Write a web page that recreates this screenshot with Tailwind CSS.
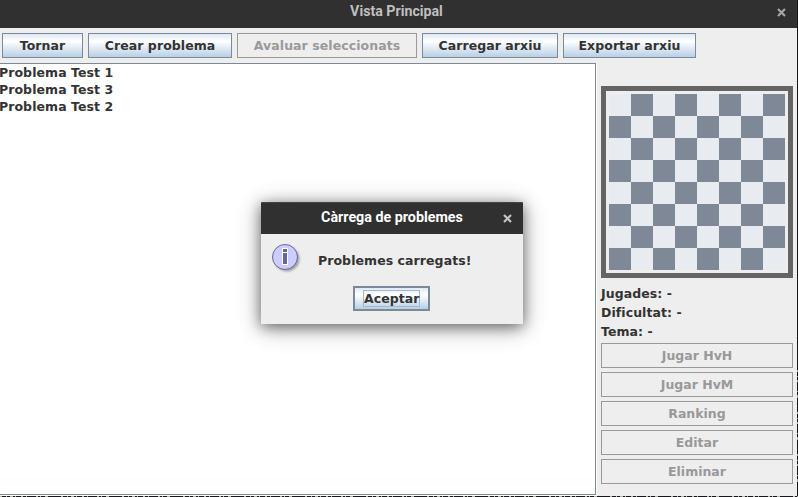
<!DOCTYPE html>
<html lang="ca">
<head>
<meta charset="utf-8">
<title>Vista Principal</title>
<script src="https://cdn.jsdelivr.net/npm/@tailwindcss/browser@4"></script>
</head>
<body class="w-[798px] h-[497px] overflow-hidden bg-[#16161c]">
<div class="relative w-[798px] h-[497px] overflow-hidden font-['DejaVu_Sans',sans-serif] font-bold text-[12.5px] leading-[17px] tracking-[0.07px] text-[#333333]">
  <div class="w-[797px] h-[496px] bg-[#eeeeee] flex flex-col">
    <header class="h-[28px] shrink-0 bg-[#303030] flex items-center text-[#bfbfbf]">
      <div class="w-[14px]"></div>
      <h1 class="flex-1 text-center pb-[5px] pl-[2px] font-[Roboto,sans-serif] font-bold text-[14.2px] tracking-normal">Vista Principal</h1>
      <svg class="w-[9px] h-[9px] mr-[11px] mt-[-4px]" viewBox="0 0 9 9"><path d="M1 1L8 8M8 1L1 8" stroke="#a6a6a6" stroke-width="2.2"/></svg>
    </header>
    <nav class="h-[35px] shrink-0 flex gap-[5px] pt-[5px] pl-[2px]">
      <button class="w-[81px] h-[25px] border border-[#7a8a99] bg-linear-[180deg,#dfe9f4_0%,#ffffff_32%,#b8cfe5_100%] whitespace-nowrap">Tornar</button>
      <button class="w-[144px] h-[25px] border border-[#7a8a99] bg-linear-[180deg,#dfe9f4_0%,#ffffff_32%,#b8cfe5_100%] whitespace-nowrap">Crear problema</button>
      <button class="w-[180px] h-[25px] border border-[#999999] text-[#999999] whitespace-nowrap">Avaluar seleccionats</button>
      <button class="w-[136px] h-[25px] border border-[#7a8a99] bg-linear-[180deg,#dfe9f4_0%,#ffffff_32%,#b8cfe5_100%] whitespace-nowrap">Carregar arxiu</button>
      <button class="w-[133px] h-[25px] border border-[#7a8a99] bg-linear-[180deg,#dfe9f4_0%,#ffffff_32%,#b8cfe5_100%] whitespace-nowrap">Exportar arxiu</button>
    </nav>
    <main class="flex h-[433px]">
      <ul class="w-[596px] h-[432px] shrink-0 bg-white border border-l-0 border-[#7a8a99] shadow-[1px_1px_0_#ffffff]">
        <li class="-ml-px">Problema Test 1</li>
        <li class="-ml-px">Problema Test 3</li>
        <li class="-ml-px">Problema Test 2</li>
      </ul>
      <aside class="w-[192px] ml-[5px] pt-[23px]">
        <div id="board" class="w-[192px] h-[192px] border-5 border-[#646464] p-[3px] grid grid-cols-8 grid-rows-8"></div>
        <div class="pt-[6px] leading-[19px]">
          <p>Jugades: -</p>
          <p>Dificultat: -</p>
          <p>Tema: -</p>
        </div>
        <div class="flex flex-col gap-[4px] pt-[2px] text-[#999999] tracking-normal">
          <button class="h-[25px] border border-[#999999]">Jugar HvH</button>
          <button class="h-[25px] border border-[#999999]">Jugar HvM</button>
          <button class="h-[25px] border border-[#999999]">Ranking</button>
          <button class="h-[25px] border border-[#999999]">Editar</button>
          <button class="h-[25px] border border-[#999999]">Eliminar</button>
        </div>
      </aside>
    </main>
  </div>
  <svg class="absolute left-0 top-[496px] w-[798px] h-[1px]" viewBox="0 0 798 1"><path d="M0 .5H798" stroke="#b9b9ae" stroke-dasharray="2 4 1 3 3 2 1 5 2 3 1 9 2 2 1 4 3 13"/></svg>
  <svg class="absolute left-[797px] top-[370px] w-[1px] h-[127px]" viewBox="0 0 1 127"><path d="M.5 0V127" stroke="#a0a09c" stroke-dasharray="2 4 1 3 2 9 1 3 3 14"/></svg>

  <section class="absolute left-[261px] top-[202px] w-[262px] h-[122px] bg-[#eeeeee] shadow-[0_3px_14px_rgba(0,0,0,0.55),0_4px_26px_rgba(0,0,0,0.2)]">
    <div class="h-[32px] bg-[#303030] border-t border-[#444444] flex items-center rounded-t-[1px]">
      <h2 class="flex-1 pl-[20px] pb-[2px] text-center font-[Roboto,sans-serif] font-bold text-[14.3px] tracking-normal text-white">Càrrega de problemes</h2>
      <svg class="w-[9px] h-[9px] mr-[11px] mt-[-1px]" viewBox="0 0 9 9"><path d="M1 1L8 8M8 1L1 8" stroke="#c4c4c4" stroke-width="2.2"/></svg>
    </div>
    <div class="flex h-[52px] pl-[8px] pt-[7px]">
      <svg class="w-[36px] h-[36px] shrink-0" viewBox="0 0 36 36">
        <defs><filter id="soft" x="-30%" y="-30%" width="160%" height="160%"><feGaussianBlur stdDeviation="1.3"/></filter></defs>
        <circle cx="18" cy="18" r="12.5" fill="#777" opacity=".65" filter="url(#soft)"/>
        <circle cx="16" cy="16" r="12.5" fill="#ccccff" stroke="#666699"/>
        <path d="M13 7h6v4h-6zM13 11h6v13h-6z" fill="#fff"/>
        <path d="M14 8h4v3h-4zM14 12h4v11h-4z" fill="#666699"/>
      </svg>
      <p class="pl-[13px] pt-[11px] whitespace-nowrap">Problemes carregats!</p>
    </div>
    <button class="block ml-[92px] w-[77px] h-[25px] border-2 border-[#7a8a99] bg-linear-[180deg,#dfe9f4_0%,#ffffff_32%,#b8cfe5_100%] p-[2px_8px]"><span class="block h-[17px] border border-[#a3b8cc] leading-[15px]">Aceptar</span></button>
  </section>
</div>
<script>
  const board = document.getElementById('board');
  for (let i = 0; i < 64; i++) {
    const cell = document.createElement('div');
    cell.className = ((i >> 3) + i) % 2 ? 'bg-[#7f8896]' : 'bg-[#e8ebef]';
    board.append(cell);
  }
</script>
</body>
</html>
